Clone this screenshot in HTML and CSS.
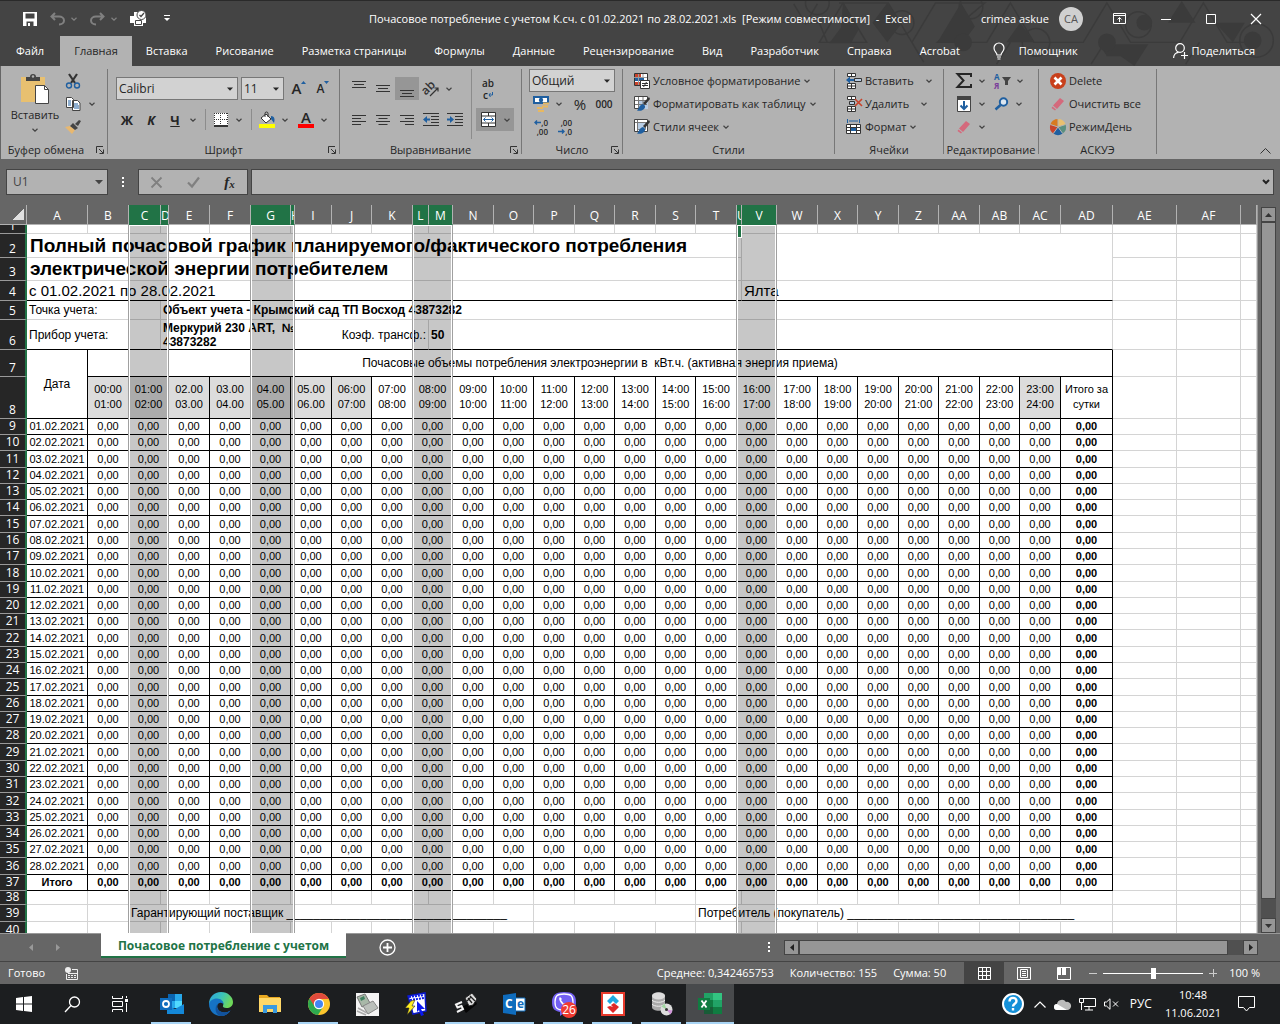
FILE: index.html
```html
<!DOCTYPE html>
<html lang="ru">
<head>
<meta charset="utf-8">
<meta name="viewport" content="width=device-width, initial-scale=1">
<title>Почасовое потребление с учетом К.сч. - Excel</title>
<link rel="stylesheet" href="styles.css">
</head>
<body>
<svg class="defs" aria-hidden="true">
  <symbol id="caret" viewBox="0 0 6 4"><path d="M.5.8 3 3.2 5.500.8" fill="none" stroke="currentColor" stroke-width="1.200"/></symbol>
  <symbol id="tri" viewBox="0 0 6 4"><path d="M0 .5h6L3 3.700z" fill="currentColor"/></symbol>
  <symbol id="launch" viewBox="0 0 8 8"><path d="M.5 7V.5H7M3 3l4 4M7.500 3.500v4h-4" fill="none" stroke="#333"/></symbol>
  <symbol id="eraser" viewBox="0 0 16 16"><path d="M10 2l4 3-7 8-4-3.500z" fill="#d4697c"/><path d="M2.500 10.500l3.500 3-1 1L1.500 12z" fill="#d4697c"/></symbol>
  <symbol id="brush" viewBox="0 0 16 16"><path d="M15 1l1 2-5 6-2-2z" fill="#333"/><path d="M9 8c2 1 3 3 1 5s-5 2-7 1.500C5 13 5 9 9 8z" fill="#1f5fa0"/></symbol>
  <symbol id="cellrows" viewBox="0 0 16 16"><path d="M1.500.5h8v3h-8zM5.500.5v3M1.500 10.500h8v5h-8zM5.500 10.500v5M1.500 13h8" fill="#fff" stroke="#333"/></symbol>
</svg>

<header class="title-bar">
  <svg class="pattern" viewBox="0 0 490 66" aria-hidden="true">
    <g fill="none" stroke="#3b3b3b" stroke-width="1.500"><path d="M0 3l12 20 12-20M26 42l24-40 24 40zM46 2h50l24 40 24-40h50l-48 40h50l24-40 24 40h50l24-40 24 40h50l24-40 24 40h30M12 22h14l8 20M120 42l12 20M220 42l-14 22M316 42l-14 22M412 42l-14 22"/><circle cx="24" cy="2" r="12"/><circle cx="110" cy="22" r="12"/><circle cx="180" cy="6" r="12"/><circle cx="246" cy="42" r="14"/><circle cx="350" cy="24" r="13"/><circle cx="470" cy="40" r="17"/></g>
    <g fill="#3b3b3b"><path d="M50 2l16 27-8 14H36l12-16z"/><path d="M80 22l15-20 15 20-15 20zM146 42l24-40 14 24-12 16zM230 22l14 20h-28zM310 44h50l-14 22-14-10-14 0zM428 22h30l-12 20zM380 22l14-22 14 22z"/><circle cx="172" cy="42" r="9"/><circle cx="318" cy="42" r="9"/><circle cx="356" cy="22" r="8"/><circle cx="466" cy="40" r="9"/></g>
  </svg>
  <div class="quick">
    <button aria-label="Сохранить"><svg width="14" height="14" viewBox="0 0 14 14"><path d="M0 0h14v14H0z" fill="#fff"/><path d="M2.500 1.500h9v5h-9zM3.500 9.500h7V14h-7z" fill="#444"/><path d="M5 11h2v3H5z" fill="#fff"/></svg></button>
    <button class="dim" aria-label="Отменить"><svg width="15" height="14" viewBox="0 0 15 14"><path d="M5 1L1.500 4.500 5 8M2 4.500h7c3 0 5 2 5 4s-2 4-5 4" fill="none" stroke="currentColor" stroke-width="2"/></svg><svg class="caret"><use href="#caret"/></svg></button>
    <button class="dim" aria-label="Вернуть"><svg width="15" height="14" viewBox="0 0 15 14"><path d="M10 1l3.500 3.500L10 8M13 4.500H6c-3 0-5 2-5 4s2 4 5 4" fill="none" stroke="currentColor" stroke-width="2"/></svg><svg class="caret"><use href="#caret"/></svg></button>
    <button aria-label="Печать"><svg width="17" height="17" viewBox="0 0 17 17"><path d="M0 6h4V2h4v4h8v7h-3v3H4v-3H0z" fill="#fff"/><path d="M5.500 10.500h6v4h-6z" fill="#fff" stroke="#444"/><circle cx="11.500" cy="5" r="4.500" fill="#fff" stroke="#444"/><path d="M9.500 5l1.500 1.500L14 3" fill="none" stroke="#444" stroke-width="1.300"/></svg></button>
    <button class="more" aria-label="Настройка панели"><svg width="6" height="7" viewBox="0 0 6 7"><path d="M0 .5h6" stroke="#fff"/><path d="M0 3h6L3 6z" fill="#fff"/></svg></button>
  </div>
  <h1 class="doc-title">Почасовое потребление с учетом К.сч. с 01.02.2021 по 28.02.2021.xls&nbsp; [Режим совместимости]&nbsp; -&nbsp; Excel</h1>
  <div class="account">
    <span>crimea askue</span><span class="avatar">CA</span>
    <button aria-label="Параметры ленты"><svg width="13" height="11" viewBox="0 0 13 11"><path d="M.5.5h12v10H.5zM.5 2.500h12M6.500 9V4.500M4.500 6.500l2-2 2 2" fill="none" stroke="#fff"/></svg></button>
    <button aria-label="Свернуть"><svg width="10" height="10" viewBox="0 0 10 10"><path d="M0 5.500h10" stroke="#fff"/></svg></button>
    <button aria-label="Развернуть"><svg width="10" height="10" viewBox="0 0 10 10"><path d="M.5.5h9v9h-9z" fill="none" stroke="#fff"/></svg></button>
    <button aria-label="Закрыть"><svg width="10" height="10" viewBox="0 0 10 10"><path d="M0 0l10 10M10 0L0 10" stroke="#fff" stroke-width="1.200"/></svg></button>
  </div>
</header>

<nav class="tabs">
  <a href="#" class="file">Файл</a><a href="#" class="current">Главная</a><a href="#">Вставка</a><a href="#">Рисование</a><a href="#">Разметка страницы</a><a href="#">Формулы</a><a href="#">Данные</a><a href="#">Рецензирование</a><a href="#">Вид</a><a href="#">Разработчик</a><a href="#">Справка</a><a href="#">Acrobat</a>
  <a href="#" class="helper"><svg width="12" height="17" viewBox="0 0 12 17"><path d="M4 12c0-3-3-3-3-7a5 5 0 0 1 10 0c0 4-3 4-3 7zM4 14h4M4.500 16h3" fill="none" stroke="#fff" stroke-width="1.200"/></svg>Помощник</a>
  <a href="#" class="share"><svg width="15" height="16" viewBox="0 0 15 16"><circle cx="7" cy="5" r="4.300" fill="none" stroke="#fff" stroke-width="1.200"/><path d="M.6 15c0-3 2-5.500 5-5.700M8 12.500h7M11.500 9v7" fill="none" stroke="#fff" stroke-width="1.200"/></svg>Поделиться</a>
</nav>

<section class="ribbon">
  <div class="group g-clip">
    <div class="tools">
      <button class="paste"><svg width="28" height="30" viewBox="0 0 28 30"><path d="M0 3h24v25H0z" fill="#e8c070"/><path d="M5 7V3h4a3 3 0 0 1 6 0h4v4z" fill="#444"/><circle cx="12" cy="2.500" r="1.200" fill="#b2b2b2"/><path d="M14.500 11.500h9l4 4v14h-13z" fill="#fff" stroke="#444"/><path d="M23.500 11.500v4h4" fill="none" stroke="#444"/></svg><span>Вставить</span><svg class="caret"><use href="#caret"/></svg></button>
      <div class="stack">
        <button aria-label="Вырезать"><svg width="16" height="16" viewBox="0 0 16 16"><path d="M4 1l6 9M12 1L6 10" stroke="#333" stroke-width="2.200"/><circle cx="4" cy="12.500" r="2.500" fill="none" stroke="#1f5fa0" stroke-width="1.400"/><circle cx="12" cy="12.500" r="2.500" fill="none" stroke="#1f5fa0" stroke-width="1.400"/></svg></button>
        <button aria-label="Копировать"><svg width="16" height="16" viewBox="0 0 16 16"><path d="M1.500 1.500h5l2 2v8h-7zM7.500 4.500h5l2.500 2.500v7.500H7.500z" fill="#fff" stroke="#444"/><path d="M3 5h3M3 7h3M3 9h3M9 8h4M9 10h5M9 12h5" stroke="#1f5fa0"/></svg><svg class="caret"><use href="#caret"/></svg></button>
        <button aria-label="Формат по образцу"><svg width="16" height="16" viewBox="0 0 16 16"><path d="M0 8l5-1 5 4-3 4z" fill="#e8b870"/><path d="M5 7l3-3 5 5-3 2zM10 5l4-4 2 1-3 5z" fill="#444"/></svg></button>
      </div>
    </div>
    <div class="label">Буфер обмена<button class="launch" aria-label="Параметры буфера"><svg width="8" height="8"><use href="#launch"/></svg></button></div>
  </div>

  <div class="group g-font">
    <div class="tools two-rows">
      <div class="line">
        <span class="pick pick-font"><select aria-label="Шрифт"><option>Calibri</option></select><svg class="tri"><use href="#tri"/></svg></span>
        <span class="pick pick-size"><select aria-label="Размер шрифта"><option>11</option></select><svg class="tri"><use href="#tri"/></svg></span>
        <button class="w24 glyph" aria-label="Увеличить шрифт"><b>A</b><svg width="5" height="3" viewBox="0 0 5 3"><path d="M0 3h5L2.500 0z" fill="#1f5fa0"/></svg></button>
        <button class="w24 glyph glyph-small" aria-label="Уменьшить шрифт"><b>A</b><svg width="5" height="3" viewBox="0 0 5 3"><path d="M0 0h5L2.500 3z" fill="#1f5fa0"/></svg></button>
      </div>
      <div class="line">
        <button class="w24 strong">Ж</button><button class="w24 strong slant">К</button><button class="w24 strong under">Ч</button><button class="w12" aria-label="Вид подчеркивания"><svg class="caret"><use href="#caret"/></svg></button>
        <i class="rule"></i>
        <button class="w24" aria-label="Границы"><svg width="14" height="14" viewBox="0 0 14 14"><path d="M0 0h14v12H0z" fill="#fff"/><path d="M0 .5h14M0 6.500h14M.5 0v12M6.500 0v12M13.500 0v12" stroke="#333" stroke-dasharray="1 1"/><path d="M0 13h14" stroke="#333" stroke-width="2"/></svg></button><button class="w12" aria-label="Выбор границ"><svg class="caret"><use href="#caret"/></svg></button>
        <i class="rule"></i>
        <button class="w24" aria-label="Цвет заливки"><svg width="16" height="16" viewBox="0 0 16 16"><path d="M2 6l5-4 5 5-5 4z" fill="#fff" stroke="#333"/><path d="M6 5V1.500a1.500 1.500 0 0 1 3 0V5" fill="none" stroke="#333"/><path d="M12 4c4 0 4 4 3 7-1-1-2-3-3-4z" fill="#1f5fa0"/><path d="M0 12h16v4H0z" fill="#ff0"/></svg></button><button class="w12" aria-label="Выбор заливки"><svg class="caret"><use href="#caret"/></svg></button>
        <button class="w24 ink" aria-label="Цвет текста"><b>A</b><i></i></button><button class="w12" aria-label="Выбор цвета"><svg class="caret"><use href="#caret"/></svg></button>
      </div>
    </div>
    <div class="label">Шрифт<button class="launch" aria-label="Параметры шрифта"><svg width="8" height="8"><use href="#launch"/></svg></button></div>
  </div>

  <div class="group g-align">
    <div class="tools">
      <div class="two-rows align-main">
        <div class="line">
          <button class="w24" aria-label="По верхнему краю"><svg width="14" height="16" viewBox="0 0 14 16"><path d="M0 .5h14M2 3.500h10M0 6.500h14" stroke="#333"/></svg></button><button class="w24" aria-label="По середине"><svg width="14" height="16" viewBox="0 0 14 16"><path d="M0 4.500h14M2 7.500h10M0 10.500h14" stroke="#333"/></svg></button><button class="w24 on" aria-label="По нижнему краю"><svg width="14" height="16" viewBox="0 0 14 16"><path d="M0 9.500h14M2 12.500h10M0 15.500h14" stroke="#333"/></svg></button><button class="w24" aria-label="Ориентация"><svg width="17" height="16" viewBox="0 0 17 16"><text x="0" y="10" font-size="12" font-weight="600" transform="rotate(-45 7 9)" fill="#333">ab</text><path d="M7 15l8-8M11.500 7H15v3.500" fill="none" stroke="#333" stroke-width="1.200"/></svg></button><button class="w12" aria-label="Выбор ориентации"><svg class="caret"><use href="#caret"/></svg></button>
        </div>
        <div class="line">
          <button class="w24" aria-label="По левому краю"><svg width="14" height="12" viewBox="0 0 14 12"><path d="M0 1.500h14M0 4.500h9M0 7.500h14M0 10.500h9" stroke="#333"/></svg></button><button class="w24" aria-label="По центру"><svg width="14" height="12" viewBox="0 0 14 12"><path d="M0 1.500h14M2.500 4.500h9M0 7.500h14M2.500 10.500h9" stroke="#333"/></svg></button><button class="w24" aria-label="По правому краю"><svg width="14" height="12" viewBox="0 0 14 12"><path d="M0 1.500h14M5 4.500h9M0 7.500h14M5 10.500h9" stroke="#333"/></svg></button><button class="w24" aria-label="Уменьшить отступ"><svg width="16" height="14" viewBox="0 0 16 14"><path d="M0 .5h16M8 3.500h8M8 6.500h8M8 9.500h8M0 12.500h16" stroke="#333"/><path d="M0 6.500l4-3.500v2.500h3v2H4V10z" fill="#1f5fa0"/></svg></button><button class="w24" aria-label="Увеличить отступ"><svg width="16" height="14" viewBox="0 0 16 14"><path d="M0 .5h16M8 3.500h8M8 6.500h8M8 9.500h8M0 12.500h16" stroke="#333"/><path d="M7 6.500L3 3v2.500H0v2h3V10z" fill="#1f5fa0"/></svg></button>
        </div>
      </div>
      <div class="two-rows align-side">
        <button class="w24 wrap" aria-label="Перенести текст"><b>ab</b><b>c<svg width="5" height="5" viewBox="0 0 5 5"><path d="M4.500 0v3H1M2.500 1L1 3l1.500 2" fill="none" stroke="#1f5fa0"/></svg></b></button>
        <button class="merge on" aria-label="Объединить ячейки"><svg width="15" height="15" viewBox="0 0 15 15"><path d="M.5.5h14v14H.5z" fill="#fff" stroke="#333"/><path d="M.5 4h14M.5 11h14M7.500 0v4M7.500 11v4" stroke="#333"/><path d="M2.500 7.500h10M4.500 5.500l-2 2 2 2M10.500 5.500l2 2-2 2" fill="none" stroke="#1f5fa0"/></svg><svg class="caret"><use href="#caret"/></svg></button>
      </div>
    </div>
    <div class="label">Выравнивание<button class="launch" aria-label="Параметры выравнивания"><svg width="8" height="8"><use href="#launch"/></svg></button></div>
  </div>

  <div class="group g-num">
    <div class="tools three-rows">
      <span class="pick pick-num"><select aria-label="Числовой формат"><option>Общий</option></select><svg class="tri"><use href="#tri"/></svg></span>
      <div class="line">
        <button class="w24" aria-label="Денежный формат"><svg width="16" height="16" viewBox="0 0 16 16"><path d="M0 0h16v8H0z" fill="#1f5fa0"/><path d="M2 2h12v4H2z" fill="#fff"/><circle cx="8" cy="4" r="2.200" fill="#1f5fa0"/><path d="M10 6.500h6v2h-6zM9 9.500h6v2H9zM4 11h6v2H4zM5 14h6v2H5z" fill="#e8b860"/></svg></button><button class="w12" aria-label="Выбор валюты"><svg class="caret"><use href="#caret"/></svg></button><button class="w24 percent">%</button><button class="w24 thousands">000</button>
      </div>
      <div class="line">
        <button class="w24 digits" aria-label="Увеличить разрядность"><span><svg width="7" height="5" viewBox="0 0 7 5"><path d="M7 2.500H1M3 .5l-2 2 2 2" fill="none" stroke="#1f5fa0" stroke-width="1.400"/></svg>,0</span><span>,00</span></button><button class="w24 digits" aria-label="Уменьшить разрядность"><span>,00</span><span><svg width="7" height="5" viewBox="0 0 7 5"><path d="M0 2.500h6M4 .5l2 2-2 2" fill="none" stroke="#1f5fa0" stroke-width="1.400"/></svg>,0</span></button>
      </div>
    </div>
    <div class="label">Число<button class="launch" aria-label="Параметры числа"><svg width="8" height="8"><use href="#launch"/></svg></button></div>
  </div>

  <div class="group g-style">
    <div class="tools three-rows">
      <button class="cmd"><svg width="16" height="16" viewBox="0 0 16 16"><path d="M.5.5h13v12H.5z" fill="#fff" stroke="#333"/><path d="M1 1h6v3H1zM1 9h5v3H1z" fill="#c8432b"/><path d="M1 5h9v3H1z" fill="#1f5fa0"/><path d="M4.500 1v11M9 1v4M0 4.500h13" stroke="#999"/><path d="M6.500 7.500h9v8h-9z" fill="#fff" stroke="#333"/><path d="M8 10.500h6M8 12.500h6M12.500 9l-3 5" stroke="#333"/></svg>Условное форматирование<svg class="caret"><use href="#caret"/></svg></button>
      <button class="cmd"><svg width="16" height="16" viewBox="0 0 16 16"><path d="M.5.5h13v12H.5z" fill="#fff" stroke="#444"/><path d="M5 5h9v8H5z" fill="#b8cde4"/><path d="M1 4.500h12M1 8.500h12M4.500 1v11M9 1v11" stroke="#777"/><use href="#brush"/></svg>Форматировать как таблицу<svg class="caret"><use href="#caret"/></svg></button>
      <button class="cmd"><svg width="16" height="16" viewBox="0 0 16 16"><path d="M.5.5h13v12H.5z" fill="#fff" stroke="#444"/><path d="M3.500 3.500h8v7h-8z" fill="#b8cde4" stroke="#888"/><path d="M1 3.500h12M3.500 1v11" stroke="#777"/><use href="#brush"/></svg>Стили ячеек<svg class="caret"><use href="#caret"/></svg></button>
    </div>
    <div class="label">Стили</div>
  </div>

  <div class="group g-cells">
    <div class="tools three-rows">
      <button class="cmd wide"><svg width="16" height="16" viewBox="0 0 16 16"><use href="#cellrows"/><path d="M8.500 5.500h7v3h-7z" fill="#b8cde4" stroke="#333"/><path d="M0 7l4-3.500V6h4v2H4v2.500z" fill="#1f5fa0"/></svg>Вставить<svg class="caret"><use href="#caret"/></svg></button>
      <button class="cmd wide"><svg width="16" height="16" viewBox="0 0 16 16"><use href="#cellrows"/><path d="M3.500 5.500h5v3h-5z" fill="#b8cde4" stroke="#333"/><path d="M9 3l7 7M16 3l-7 7" stroke="#c8432b" stroke-width="1.600"/></svg>Удалить<svg class="caret"><use href="#caret"/></svg></button>
      <button class="cmd"><svg width="16" height="16" viewBox="0 0 16 16"><path d="M1.500 0v4M13.500 0v4M3 2h9" stroke="#1f5fa0"/><path d="M.5 5.500h14v9H.5z" fill="#fff" stroke="#333"/><path d="M0 8.500h15M0 11.500h15M4.500 5v10M10.500 5v10" stroke="#333"/><path d="M5 9h5v3H5z" fill="#1f5fa0"/></svg>Формат<svg class="caret"><use href="#caret"/></svg></button>
    </div>
    <div class="label">Ячейки</div>
  </div>

  <div class="group g-edit">
    <div class="tools three-rows">
      <div class="line"><button class="edit-a" aria-label="Автосумма"><svg width="16" height="16" viewBox="0 0 16 16"><path d="M15 4V1H1.500l6 6.500L1.500 14H15v-3" fill="none" stroke="#262626" stroke-width="2"/></svg><svg class="caret"><use href="#caret"/></svg></button><button class="edit-b" aria-label="Сортировка и фильтр"><span class="az"><b>А</b><b>Я</b></span><svg width="9" height="8" viewBox="0 0 9 8"><path d="M0 0h9L6 4v4H3V4z" fill="#444"/></svg><svg class="caret"><use href="#caret"/></svg></button></div>
      <div class="line"><button class="edit-a" aria-label="Заполнить"><svg width="16" height="16" viewBox="0 0 16 16"><path d="M1.500.5h13v15h-13z" fill="#fff" stroke="#444"/><path d="M1 0h14v4H1z" fill="#444"/><path d="M8 5v8M4.500 9.500L8 13l3.500-3.500" fill="none" stroke="#1f5fa0" stroke-width="2"/></svg><svg class="caret"><use href="#caret"/></svg></button><button class="edit-b" aria-label="Найти"><svg width="16" height="16" viewBox="0 0 16 16"><circle cx="9.500" cy="6" r="3.700" fill="#dce6f0" stroke="#1f5fa0" stroke-width="2"/><path d="M6.500 9L1.500 13.500" stroke="#1f5fa0" stroke-width="2.500"/></svg><svg class="caret"><use href="#caret"/></svg></button></div>
      <div class="line"><button class="edit-a" aria-label="Очистить"><svg width="16" height="16"><use href="#eraser"/></svg><svg class="caret"><use href="#caret"/></svg></button></div>
    </div>
    <div class="label">Редактирование</div>
  </div>

  <div class="group g-askue">
    <div class="tools three-rows">
      <button class="cmd"><svg width="16" height="16" viewBox="0 0 16 16"><circle cx="8" cy="8" r="8" fill="#c8401c"/><path d="M4.500 4.500l7 7M11.500 4.500l-7 7" stroke="#fff" stroke-width="2.600"/></svg>Delete</button>
      <button class="cmd"><svg width="16" height="16"><use href="#eraser"/></svg>Очистить все</button>
      <button class="cmd"><svg width="16" height="16" viewBox="0 0 16 16"><path d="M8 8V0a8 8 0 0 1 7.600 5.500z" fill="#e8c070"/><path d="M8 8l7.600-2.500a8 8 0 0 1-2.900 9z" fill="#5a9080"/><path d="M8 8l4.700 6.500a8 8 0 0 1-9.400 0z" fill="#1f5fa0"/><path d="M8 8l-4.700 6.500a8 8 0 0 1-2.900-9z" fill="#c8432b"/><path d="M8 8L.4 5.500A8 8 0 0 1 8 0z" fill="#d87a20"/><path d="M8 8V0M8 8l7.600-2.500M8 8l4.700 6.500M8 8l-4.700 6.500M8 8L.4 5.500" stroke="#b2b2b2"/></svg>РежимДень</button>
    </div>
    <div class="label">АСКУЭ</div>
  </div>
  <button class="collapse" aria-label="Свернуть ленту"><svg width="11" height="6" viewBox="0 0 11 6"><path d="M.5 5.500l5-5 5 5" fill="none" stroke="#333"/></svg></button>
</section>

<section class="formula-row">
  <span class="pick name-box"><input aria-label="Имя ячейки" value="U1"><svg class="tri big"><use href="#tri"/></svg></span>
  <svg class="dots" width="2" height="11" viewBox="0 0 2 11"><path d="M0 0h2v2H0zM0 4h2v2H0zM0 8h2v2H0z" fill="#fff"/></svg>
  <div class="fx">
    <button aria-label="Отмена"><svg width="11" height="11" viewBox="0 0 11 11"><path d="M.5.5l10 10M10.500.5l-10 10" stroke="#808080" stroke-width="1.800"/></svg></button>
    <button aria-label="Ввод"><svg width="13" height="11" viewBox="0 0 13 11"><path d="M1 5.500l4 4 7-9" fill="none" stroke="#808080" stroke-width="2.200"/></svg></button>
    <button class="fn" aria-label="Вставить функцию">f<small>x</small></button>
  </div>
  <div class="formula"><input aria-label="Строка формул"><svg width="8" height="6" viewBox="0 0 8 6"><path d="M1 1l3 3 3-3" fill="none" stroke="#222" stroke-width="2"/></svg></div>
</section>

<main class="work">
  <div class="sheet">
    <table class="grid">
      <colgroup id="cols"></colgroup>
      <thead><tr id="letters"></tr></thead>
      <tbody id="top">
        <tr class="h9" data-blank><th><div class="cut">1</div></th></tr>
        <tr class="h24"><th>2</th><td colspan="21" class="headline">Полный почасовой график планируемого/фактического потребления</td><td colspan="9" rowspan="2"></td><td></td><td></td><td></td></tr>
        <tr class="h23"><th>3</th><td colspan="21" class="headline">электрической энергии потребителем</td><td></td><td></td><td></td></tr>
        <tr class="h20"><th>4</th><td colspan="21" class="period dark-b">с 01.02.2021 по 28.02.2021</td><td colspan="9" class="period dark-b">Ялта</td><td></td><td></td><td></td></tr>
        <tr class="h19"><th>5</th><td colspan="3" class="note">Точка учета:</td><td colspan="27" class="note strong-text">Объект учета - Крымский сад ТП Восход 43873282</td><td></td><td></td><td></td></tr>
        <tr class="h30"><th>6</th><td colspan="3" class="note dark-b">Прибор учета:</td><td colspan="5" class="note strong-text dark-b meter">Меркурий 230 ART,&nbsp; №<br>43873282</td><td colspan="4" class="note right dark-b">Коэф. трансф.:</td><td colspan="18" class="note strong-text dark-b">50</td><td></td><td></td><td></td></tr>
        <tr class="h27"><th>7</th><td rowspan="2" class="box caption">Дата</td><td colspan="29" class="box caption">Почасовые объемы потребления электроэнергии в&nbsp; кВт.ч. (активная энергия приема)</td><td></td><td></td><td></td></tr>
        <tr class="h42" id="hours"><th>8</th></tr>
      </tbody>
      <tbody id="days"></tbody>
      <tbody>
        <tr class="h14" data-blank><th>38</th></tr>
        <tr class="h17"><th>39</th><td></td><td></td><td colspan="13" class="sign">Гарантирующий поставщик _________________________________</td><td colspan="4"></td><td colspan="11" class="sign">Потребитель (покупатель) __________________________________</td><td></td><td></td><td></td></tr>
        <tr class="h17" data-blank><th>40</th></tr>
      </tbody>
    </table>
    <div class="band band-c"></div><div class="band band-g"></div><div class="band band-l"></div><div class="band band-u"></div>
    <div class="active-cell"></div>
  </div>
  <div class="vscroll">
    <button aria-label="Вверх"><svg width="7" height="4" viewBox="0 0 7 4"><path d="M0 4h7L3.500 0z" fill="#333"/></svg></button>
    <div class="vthumb"></div><div class="vgap"></div>
    <button aria-label="Вниз"><svg width="7" height="4" viewBox="0 0 7 4"><path d="M0 0h7L3.500 4z" fill="#333"/></svg></button>
  </div>
</main>

<section class="sheet-tabs">
  <div class="tab-nav"><button aria-label="Предыдущий лист"><svg width="4" height="7" viewBox="0 0 4 7"><path d="M4 0v7L0 3.500z" fill="#999"/></svg></button><button aria-label="Следующий лист"><svg width="4" height="7" viewBox="0 0 4 7"><path d="M0 0v7l4-3.500z" fill="#999"/></svg></button></div>
  <a href="#" class="sheet-tab">Почасовое потребление с учетом</a>
  <button class="add" aria-label="Новый лист"><svg width="17" height="17" viewBox="0 0 17 17"><circle cx="8.500" cy="8.500" r="7.500" fill="none" stroke="#fff" stroke-width="1.300"/><path d="M8.500 4v9M4 8.500h9" stroke="#fff" stroke-width="1.800"/></svg></button>
  <svg class="dots" width="2" height="11" viewBox="0 0 2 11"><path d="M0 0h2v2H0zM0 4h2v2H0zM0 8h2v2H0z" fill="#fff"/></svg>
  <div class="hscroll">
    <button aria-label="Влево"><svg width="4" height="7" viewBox="0 0 4 7"><path d="M4 0v7L0 3.500z" fill="#222"/></svg></button>
    <div class="hthumb"></div><div class="hgap"></div>
    <button aria-label="Вправо"><svg width="4" height="7" viewBox="0 0 4 7"><path d="M0 0v7l4-3.500z" fill="#222"/></svg></button>
  </div>
</section>

<footer class="status">
  <span>Готово</span>
  <svg class="macro" width="13" height="13" viewBox="0 0 13 13"><circle cx="3" cy="3" r="3" fill="#eee"/><path d="M7 2.500h5.500v10h-11V7M3 6.500h10M3 8.500h2M6 8.500h2M9 8.500h2M3 10.500h2M6 10.500h2M9 10.500h2" fill="none" stroke="#eee"/></svg>
  <div class="stats"><span>Среднее: 0,342465753</span><span>Количество: 155</span><span>Сумма: 50</span></div>
  <div class="views">
    <button class="on" aria-label="Обычный"><svg width="13" height="13" viewBox="0 0 13 13"><path d="M.5.5h12v12H.5zM.5 4.500h12M.5 8.500h12M4.500.5v12M8.500.5v12" fill="none" stroke="#fff"/></svg></button><button aria-label="Разметка страницы"><svg width="14" height="13" viewBox="0 0 14 13"><path d="M.5.5h13v12H.5zM3.500 2.500h7v8h-7zM5 4.500h4M5 6.500h4M5 8.500h4" fill="none" stroke="#fff"/></svg></button><button aria-label="Страничный"><svg width="14" height="13" viewBox="0 0 14 13"><path d="M.5.5h13v12H.5z" fill="none" stroke="#fff"/><path d="M1 1h3v7H1zM5 1h4v7H5z" fill="#fff"/></svg></button>
  </div>
  <div class="zoom"><button aria-label="Мельче"><svg width="8" height="8" viewBox="0 0 8 8"><path d="M0 4.500h8" stroke="#ccc"/></svg></button><input type="range" min="10" max="190" value="100" aria-label="Масштаб"><button aria-label="Крупнее"><svg width="8" height="8" viewBox="0 0 8 8"><path d="M0 4.500h8M4.500 0v8" stroke="#ccc"/></svg></button><span>100 %</span></div>
</footer>

<section class="taskbar">
  <button class="sys" aria-label="Пуск"><svg width="16" height="16" viewBox="0 0 16 16"><path d="M0 2l7-1v6.500H0zM8 1l8-1v7.500H8zM0 8.500h7V15l-7-1zM8 8.500h8V16l-8-1z" fill="#fff"/></svg></button>
  <button class="sys" aria-label="Поиск"><svg width="17" height="17" viewBox="0 0 17 17"><circle cx="10.500" cy="6" r="5" fill="none" stroke="#fff" stroke-width="1.300"/><path d="M7 9.500L1 16" stroke="#fff" stroke-width="1.300"/></svg></button>
  <button class="sys" aria-label="Представление задач"><svg width="17" height="16" viewBox="0 0 17 16"><path d="M.5 0v2.500h10V0M.5 5.500h10v5H.5zM.5 16v-2.500h10V16M14.500 0v2M14.500 7v9" fill="none" stroke="#fff"/><path d="M13 3h3v3h-3z" fill="#fff"/></svg></button>
  <div class="apps">
  <button class="open" aria-label="Outlook"><svg width="24" height="22" viewBox="0 0 24 22"><path d="M8 1h14v14H8z" fill="#28a8ea"/><path d="M8 1h7v7H8z" fill="#0a64b0"/><path d="M15 8h7v7h-7z" fill="#50d9ff"/><path d="M7 12l8 4 9-5v10H7z" fill="#1488d8"/><path d="M0 5h12v12H0z" fill="#0f6cbd"/><circle cx="6" cy="11" r="3" fill="none" stroke="#fff" stroke-width="1.800"/></svg></button>
  <button aria-label="Edge"><svg width="24" height="24" viewBox="0 0 24 24"><defs><linearGradient id="edge-top" x2="1" y2=".4"><stop offset="0" stop-color="#2a9fe0"/><stop offset=".55" stop-color="#3cc4b8"/><stop offset="1" stop-color="#6fd85a"/></linearGradient></defs><path d="M0 12C0 5 5 0 12 0s12 5 12 10c0 4-3 6-6.500 6-3 0-4-1.200-3.500-2.200 1.200-2.300-.8-5.300-4.500-5.300C5 8.500 1.500 10 0 13z" fill="url(#edge-top)"/><path d="M0 12c1-4 5-5.500 8-5.500 4 0 7 3 6.500 6-.8-1.500-3-2.500-5-1-2 2-1.500 6 2 8 3 1.700 7 1 10-1-2 3.500-5.500 5.500-9.500 5.500C5 24 0 18.500 0 12z" fill="#1673c4"/><path d="M9 11.800c-2 2.200-1.300 5.800 2.500 7.700 3 1.500 7 1 10-1-2 3.500-5.500 5.500-9.500 5.500-6 0-7-10-3-12.200z" fill="#12529c"/></svg></button>
  <button aria-label="Проводник"><svg width="22" height="20" viewBox="0 0 22 20"><path d="M0 1h8l2 2h11v5H0z" fill="#e8a820"/><path d="M0 4h22v14H0z" fill="#ffd868"/><path d="M4 11h14v8h-4v-4H8v4H4z" fill="#3a9ae0"/></svg></button>
  <button class="open" aria-label="Chrome"><svg width="22" height="22" viewBox="0 0 22 22"><circle cx="11" cy="11" r="11" fill="#fbc52d"/><path d="M1.500 5.500a11 11 0 0 1 19 0L21 6H11l-5 8z" fill="#e04a3c"/><path d="M1.500 5.500L7 14l8 0-5 8A11 11 0 0 1 1.500 5.500z" fill="#2da94f"/><circle cx="11" cy="11" r="5.200" fill="#fff"/><circle cx="11" cy="11" r="4" fill="#4285f4"/></svg></button>
  <button aria-label="Счетчики"><svg width="23" height="23" viewBox="0 0 23 23"><path d="M0 0h23v23H0z" fill="#f4f4f4"/><path d="M1 4l8-3 5 9-8 4z" fill="#a8b8a8" stroke="#777"/><path d="M4 5l4-2 1 3-4 2z" fill="#408060"/><path d="M7 13l10-5 5 7-10 6z" fill="#bbc0bb" stroke="#888"/><path d="M2 15l9 5M1 18l9 4" stroke="#aaa" stroke-width="1.500"/></svg></button>
  <button aria-label="Конфигуратор"><svg width="23" height="23" viewBox="0 0 23 23"><path d="M3 3l17-3 1 18-13 3z" fill="#fff" stroke="#0a18c8" stroke-width="1.500"/><path d="M4 4l15-2M5 7l14-2" stroke="#0a18e8" stroke-width="2" stroke-dasharray="2 1"/><path d="M12 8l8 8-4 0 3 6-3 1-2-6-2 2z" fill="#0a18f0"/><path d="M6 8l4-1-3 6h3l-8 9 2-7H0z" fill="#ffee20" stroke="#222" stroke-width=".6"/></svg></button>
  <button class="open" aria-label="Терминал"><svg width="24" height="24" viewBox="0 0 24 24"><path d="M8 15l4 6 11-9-2-4z" fill="#050505"/><path d="M8 10l-6 2.500 1.500 3 4-1.500 1.500 3-6 3" fill="none" stroke="#f4f4f4" stroke-width="2"/><path d="M11 6l7-5 5 6-4 6-4 1z" fill="#ddd" stroke="#222"/><path d="M14 6l4 5M16 4l5 5M13 9l4-4" stroke="#222" stroke-width="1.300"/></svg></button>
  <button class="open" aria-label="Энергосфера"><svg width="23" height="22" viewBox="0 0 23 22"><path d="M11 5h11v13H11z" fill="#fff" stroke="#0f6cbd"/><path d="M0 2l13-2v22L0 20z" fill="#0f6cbd"/><text x="2" y="15" font-size="12" font-weight="700" fill="#fff">C</text><text x="14" y="15" font-size="12" font-weight="700" fill="#0f6cbd">e</text></svg></button>
  <button class="open" aria-label="Viber"><svg width="24" height="24" viewBox="0 0 24 24"><path d="M12 0c9 0 12 3 12 10s-3 11-12 11l-4 3v-4C2 19 0 16 0 10S3 0 12 0z" fill="#7360f2"/><path d="M12 2c7 0 9 2 9 8s-2 8-9 8-9-2-9-8 2-8 9-8z" fill="none" stroke="#fff" stroke-width="1.300"/><path d="M8 5c-3 2 3 10 7 10l1-2-3-2-1 1-3-4 1-1z" fill="#fff"/></svg><span class="badge">26</span></button>
  <button class="open" aria-label="Метрика"><svg width="24" height="24" viewBox="0 0 24 24"><path d="M1 1h22v22H1z" fill="#fff" stroke="#e83a2c" stroke-width="2"/><path d="M12 3l6 6-3 3-3-3-3 3-3-3z" fill="#20a8e0"/><path d="M12 21l6-6-5-4-3 2 2 2-3-1-3 1z" fill="#e02828"/></svg></button>
  <button class="open" aria-label="База данных"><svg width="22" height="24" viewBox="0 0 22 24"><path d="M1 4c0-5 13-5 13 0v11c0 5-13 5-13 0z" fill="#aaa"/><ellipse cx="7.500" cy="4" rx="6.500" ry="3.500" fill="#ddd"/><path d="M1 8c2 3 11 3 13 0M1 12c2 3 11 3 13 0" fill="none" stroke="#eee"/><circle cx="15.500" cy="17.500" r="6" fill="#ddd"/><path d="M15.500 17.500l-5-3 3-3z" fill="#a0d8a0"/><path d="M15.500 17.500l6 1-2 4z" fill="#d090d8"/><circle cx="15.500" cy="17.500" r="1.500" fill="#333"/></svg></button>
  <button class="open lit" aria-label="Excel"><svg width="24" height="22" viewBox="0 0 24 22"><path d="M6 0h18v21H6z" fill="#21a366"/><path d="M15 0h9v7h-9z" fill="#33c481"/><path d="M6 7h9v7H6z" fill="#107c41"/><path d="M6 14h9v7H6z" fill="#185c37"/><path d="M15 14h9v7h-9z" fill="#107c41"/><path d="M0 5h12v12H0z" fill="#107c41"/><path d="M3.500 7.500l5 7M8.500 7.500l-5 7" stroke="#fff" stroke-width="1.800"/></svg></button>
  </div>
  <div class="tray">
    <svg class="help" width="22" height="22" viewBox="0 0 22 22"><circle cx="11" cy="11" r="10" fill="#1490d8" stroke="#fff" stroke-width="2"/><path d="M7.500 8.500c0-5 7-4.500 7-.5 0 3-3.500 2.500-3.500 5.500M11 15v2.500" fill="none" stroke="#fff" stroke-width="2.400"/></svg>
    <svg width="12" height="7" viewBox="0 0 12 7"><path d="M.5 6.500L6 1l5.500 5.500" fill="none" stroke="#fff" stroke-width="1.200"/></svg>
    <svg width="17" height="11" viewBox="0 0 17 11"><path d="M3 11a3 3 0 0 1 0-6 5 5 0 0 1 9-2 4 4 0 0 1 2 8z" fill="#bbb"/><path d="M3 5l10 6H3a3 3 0 0 1 0-6z" fill="#fff"/></svg>
    <svg width="17" height="14" viewBox="0 0 17 14"><path d="M4 1.500h12.500v8H5M10 10v3M6 13h8M.5 1.500h4v4h-4zM2.500 6v7" fill="none" stroke="#fff"/></svg>
    <svg width="15" height="12" viewBox="0 0 15 12"><path d="M.5 4h2L6 .8v10.500L2.500 8h-2zM9 3.500l5 5M14 3.500l-5 5" fill="none" stroke="#fff"/></svg>
    <span class="lang">РУС</span>
    <span class="clock"><time>10:48</time><time>11.06.2021</time></span>
    <svg class="bell" width="17" height="16" viewBox="0 0 17 16"><path d="M.5.5h16v11h-5L8.500 15l-3-3.500h-5z" fill="none" stroke="#fff"/></svg>
  </div>
</section>
<script src="sheet.js"></script>
</body>
</html>
```

FILE: sheet.js
```js
// Column letter, width in pixels, and 1 when the column is selected.
const columns = [
  ['A', 61], ['B', 41], ['C', 32, 1], ['D', 8, 1], ['E', 41], ['F', 41], ['G', 40, 1], ['H', 4, 1],
  ['I', 37], ['J', 40], ['K', 41], ['L', 16, 1], ['M', 24, 1], ['N', 41], ['O', 40], ['P', 41],
  ['Q', 40], ['R', 41], ['S', 40], ['T', 41], ['U', 5, 1], ['V', 35, 1], ['W', 41], ['X', 40],
  ['Y', 41], ['Z', 40], ['AA', 41], ['AB', 40], ['AC', 41], ['AD', 52], ['AE', 64], ['AF', 64], ['', 0]
];
// Hours whose cell is merged over two columns.
const merged = [1, 5, 8, 16];
const taller = [11, 15, 18, 22, 25, 29, 32, 36];

const two = n => String(n).padStart(2, '0');
const hourIndexes = Array.from({ length: 24 }, (_, i) => i);
const span = h => merged.includes(h) ? ' colspan="2"' : '';
const rest = '<td></td>'.repeat(3);

document.getElementById('cols').innerHTML =
  '<col style="width:27px">' + columns.map(c => c[1] ? `<col style="width:${c[1]}px">` : '<col>').join('');
document.getElementById('letters').innerHTML =
  '<th class="corner"></th>' + columns.map(c => `<th class="${c[2] ? 'sel' : ''}">${c[0]}</th>`).join('');

document.querySelectorAll('tr[data-blank]').forEach(row => {
  row.insertAdjacentHTML('beforeend', '<td></td>'.repeat(columns.length));
});

document.getElementById('hours').insertAdjacentHTML('beforeend',
  hourIndexes.map(h => {
    const mark = h >= 2 && h <= 5 ? '.' : ':';
    const shade = h < 7 || h === 23 ? ' shade' : '';
    return `<td class="box hour${shade}"${span(h)}>${two(h)}${mark}00<br>${two(h + 1)}${mark}00</td>`;
  }).join('') + '<td class="box hour">Итого за сутки</td>' + rest);

let days = '';
for (let row = 9; row <= 37; row++) {
  const total = row === 37;
  days += `<tr class="${taller.includes(row) ? 'h17' : 'h16'}${total ? ' total' : ''}"><th>${row}</th>` +
    `<td class="box">${total ? 'Итого' : two(row - 8) + '.02.2021'}</td>` +
    hourIndexes.map(h => `<td class="box"${span(h)}>0,00</td>`).join('') +
    `<td class="box strong-text">0,00</td>${rest}</tr>`;
}
document.getElementById('days').innerHTML = days;
```

FILE: styles.css
```css
* { box-sizing: border-box; }
body {
  margin: 0;
  height: 100vh;
  display: flex;
  flex-direction: column;
  overflow: hidden;
  background: #666;
  color: #262626;
  font: 11px/16px "Open Sans", "Noto Sans", sans-serif;
}
button, input, select { font: inherit; color: inherit; border: 0; background: none; padding: 0; margin: 0; }
button { display: flex; align-items: center; justify-content: center; white-space: nowrap; }
a { color: inherit; text-decoration: none; }
svg { flex: none; display: block; overflow: visible; }
.defs { position: absolute; width: 0; height: 0; }
.caret { width: 6px; height: 4px; color: #444; }
.tri { width: 6px; height: 4px; }
.tri.big { width: 8px; height: 6px; }

.title-bar {
  position: relative;
  display: flex;
  align-items: center;
  height: 36px;
  flex: none;
  background: #444;
  border-top: 1px solid #2a2a2a;
  box-shadow: 0 30px 0 #444;
  color: #fff;
}
.title-bar .caret { color: inherit; }
.pattern { position: absolute; right: 0; top: 0; width: 490px; height: 65px; overflow: hidden; }
.quick { display: flex; align-items: center; width: 300px; padding-left: 23px; gap: 13px; }
.quick .dim { color: #808080; gap: 6px; }
.quick .more { margin-left: 4px; }
.doc-title { flex: 1; margin: 0; text-align: center; font-size: 11px; font-weight: 400; white-space: nowrap; position: relative; }
.account { position: relative; display: flex; align-items: center; width: 300px; padding-right: 19px; justify-content: flex-end; white-space: nowrap; }
.avatar { width: 24px; height: 24px; border-radius: 50%; background: #d0d0d0; color: #555; text-align: center; line-height: 24px; margin: 0 30px 0 10px; }
.account button + button { margin-left: 35px; }

.tabs { position: relative; display: flex; height: 30px; flex: none; color: #fff; }
.tabs a { display: flex; align-items: center; padding: 0 14px; white-space: nowrap; }
.tabs .file { padding: 0 16px; }
.tabs .current { background: #b2b2b2; color: #262626; }
.tabs .helper { gap: 14px; margin-left: 5px; }
.tabs .share { margin-left: auto; gap: 4px; padding-right: 25px; }

.ribbon { display: flex; height: 93px; flex: none; background: #b2b2b2; margin-left: 1px; position: relative; }
.group { display: flex; flex-direction: column; flex: none; border-right: 1px solid #777; margin: 3px 0 5px; }
.tools { display: flex; height: 70px; flex: none; }
.two-rows { flex-direction: column; display: flex; padding-top: 8px; gap: 8px; }
.three-rows { flex-direction: column; align-items: flex-start; }
.three-rows > * { height: 23px; flex: none; }
.line { display: flex; align-items: center; height: 23px; }
.line button { height: 23px; }
.label { position: relative; text-align: center; line-height: 14px; padding-top: 4px; white-space: nowrap; }
.launch { position: absolute; right: 3px; top: 7px; }
.w24 { width: 24px; }
.w12 { width: 12px; }
.on { background: #969696; }
.rule { width: 1px; height: 21px; background: #8c8c8c; margin: 0 3px 0 6px; }
.pick { display: flex; align-items: center; border: 1px solid #777; background: #d2d2d2; height: 23px; padding-right: 4px; font-size: 12px; }
.pick select, .pick input { appearance: none; flex: 1; min-width: 0; padding-left: 2px; outline: none; }
.g-clip { width: 107px; }
.g-clip .label { padding-right: 16px; }
.g-font { width: 232px; }
.g-align { width: 182px; }
.g-num { width: 101px; }
.g-style { width: 212px; }
.g-cells { width: 109px; }
.g-edit { width: 95px; }
.g-askue { width: 118px; }
.paste { flex-direction: column; margin-left: 6px; width: 56px; gap: 3px; justify-content: flex-start; padding-top: 5px; }
.paste .caret { margin-top: 2px; }
.stack { display: flex; flex-direction: column; }
.stack button { height: 23px; gap: 8px; margin-left: 2px; justify-content: flex-start; }
.g-font .tools { padding-left: 7px; }
.g-font .line:first-child { padding-left: 1px; }
.pick-font { width: 122px; margin-right: 3px; }
.pick-size { width: 43px; margin-right: 3px; }
.glyph { align-items: flex-start; font-size: 15px; }
.glyph b { line-height: 23px; font-weight: 600; }
.glyph svg { margin-top: 4px; }
.glyph-small { font-size: 12px; }
.strong { font-weight: 700; font-size: 13px; }
.slant { font-style: italic; }
.under { text-decoration: underline; }
.ink { flex-direction: column; margin-left: 3px; }
.ink b { font-size: 15px; line-height: 13px; font-weight: 600; }
.ink i { width: 16px; height: 4px; background: #f00; }
.align-main { padding-left: 7px; width: 131px; }
.align-side { border-left: 1px solid #8c8c8c; padding-left: 4px; }
.wrap { flex-direction: column; height: 23px; font-size: 10px; }
.wrap b { display: flex; align-items: center; font-weight: 600; line-height: 12px; }
.merge { width: 38px; height: 23px; gap: 8px; }
.g-num .tools { padding-left: 7px; }
.pick-num { width: 86px; }
.percent { font-size: 15px; margin-left: 3px; }
.thousands { font-size: 10px; font-weight: 600; }
.digits { flex-direction: column; line-height: 9px; font-size: 8px; font-weight: 600; align-items: flex-end; padding-right: 5px; }
.digits span { display: flex; align-items: center; height: 9px; }
.cmd { gap: 3px; }
.g-style .tools, .g-cells .tools, .g-askue .tools { padding-left: 11px; }
.cmd .caret { margin-left: 1px; }
.cmd.wide .caret { margin-left: 9px; }
.g-edit .tools { padding-left: 12px; }
.edit-a { gap: 7px; width: 38px; justify-content: flex-start; }
.edit-b { gap: 6px; }
.az { display: flex; flex-direction: column; font-size: 8px; line-height: 9px; color: #1f5fa0; margin-right: -4px; }
.az b + b { color: #7a3d9a; }
.collapse { margin: auto 9px 5px auto; }

.formula-row { display: flex; align-items: center; height: 46px; flex: none; padding: 0 6px; }
.formula-row .pick, .fx, .formula { height: 26px; background: #b2b2b2; border: 1px solid #444; }
.name-box { width: 102px; color: #444; }
.name-box input { padding-left: 6px; }
.dots { margin: 0 14px; }
.fx { display: flex; align-items: center; width: 110px; justify-content: space-around; margin-right: 3px; }
.fn { font: italic 700 15px "Liberation Serif", serif; }
.fn small { font-size: 11px; padding-top: 4px; }
.formula { flex: 1; display: flex; align-items: center; padding-right: 3px; }
.formula input { flex: 1; outline: none; }

.work { display: flex; flex: 1; min-height: 0; }
.sheet { position: relative; flex: 1; min-width: 0; overflow: hidden; background: #fff; border-right: 1px solid #999; }
.grid { table-layout: fixed; width: 100%; border-spacing: 0; font: 11px/14px "Liberation Sans", Arial, sans-serif; color: #000; }
.grid th, .grid td { padding: 0; border: solid #d4d4d4; border-width: 0 1px 1px 0; overflow: hidden; }
.grid thead th {
  height: 20px;
  padding-top: 2px;
  background: #666;
  color: #fff;
  font: 12px/17px "Open Sans", "Noto Sans", sans-serif;
  border-color: #b2b2b2;
}
.grid thead th.sel { background: #217346; border-bottom-color: #217346; }
.grid thead .corner { background: linear-gradient(135deg, #666 50%, #e0e0e0 50%) 12px 3px / 12px 12px no-repeat #666; }
.grid tbody th {
  padding-bottom: 1px;
  background: #262626;
  color: #fff;
  font: 12px/14px "Open Sans", "Noto Sans", sans-serif;
  vertical-align: bottom;
  border-right: 2px solid #217346;
  border-bottom-color: #999;
}
.grid tbody .h9 th { padding: 0; }
.cut { height: 8px; display: flex; align-items: flex-end; justify-content: center; overflow: hidden; }
.h9 { height: 9px; } .h14 { height: 14px; } .h16 { height: 16px; } .h17 { height: 17px; } .h19 { height: 19px; }
.h20 { height: 20px; } .h23 { height: 23px; } .h24 { height: 24px; } .h27 { height: 27px; } .h30 { height: 30px; } .h42 { height: 42px; }
.grid .h14 th { line-height: 12px; }
.grid .headline { font-size: 19px; line-height: 22px; font-weight: 700; padding-left: 3px; white-space: nowrap; }
.grid .period { font-size: 15px; line-height: 18px; padding-left: 2px; }
.grid .note { font-size: 12px; line-height: 14px; padding-left: 2px; white-space: nowrap; }
.grid .right { text-align: right; padding-right: 2px; }
.grid .dark-b { border-bottom-color: #000; }
.grid .meter { border-right-color: #fff; overflow: visible; }
.strong-text, .total td { font-weight: 700; }
.grid .box { border-color: #000; text-align: center; vertical-align: middle; white-space: nowrap; padding-bottom: 1px; }
.grid .caption { font-size: 12px; }
.grid .hour { line-height: 15px; white-space: normal; }
.shade { background: #dcdcdc; }
.grid .sign { font-size: 12px; line-height: 14px; padding: 0 0 1px 2px; white-space: nowrap; }
.band {
  position: absolute;
  top: 20px;
  bottom: 0;
  width: 39px;
  background: rgba(0, 0, 0, .22);
  background-clip: padding-box;
  border: solid #fff;
  border-width: 1px 1px 0;
  box-shadow: 0 0 0 1px #a0a0a0;
  clip-path: inset(0 -1px 0 -1px);
}
.band-c { left: 129px; }
.band-g { left: 251px; width: 43px; }
.band-l { left: 413px; }
.band-u { left: 737px; }
.active-cell { position: absolute; left: 737px; top: 20px; width: 5px; height: 13px; border: 1px solid #fff; background: #217346; }

.vscroll { display: flex; flex-direction: column; width: 22px; padding: 2px 4px 0 3px; }
.vscroll button { height: 15px; background: #969696; border: 1px solid #444; }
.vthumb { flex: 1; background: #969696; border: 1px solid #444; }
.vgap { height: 19px; background: #505050; }

.sheet-tabs { display: flex; align-items: center; height: 28px; flex: none; border-top: 1px solid #999; }
.tab-nav { display: flex; width: 101px; padding-left: 29px; gap: 23px; }
.sheet-tab { align-self: stretch; margin-top: -1px; margin-bottom: 3px; width: 245px; text-align: center; padding-top: 3px; background: #fff; color: #217346; font-size: 12px; font-weight: 700; border-bottom: 2px solid #217346; line-height: 20px; white-space: nowrap; }
.add { margin: 0 auto 0 33px; }
.hscroll { display: flex; width: 474px; height: 15px; margin-right: 22px; }
.hscroll button { width: 15px; background: #969696; border: 1px solid #444; }
.hthumb { flex: 1; background: #969696; border: 1px solid #444; }
.hgap { width: 15px; background: #505050; }

.status { display: flex; align-items: center; height: 23px; flex: none; padding: 0 20px 0 8px; border-top: 1px solid #444; color: #fff; white-space: nowrap; }
.macro { margin-left: 20px; }
.stats { display: flex; gap: 16px; margin-left: auto; }
.views { display: flex; align-self: stretch; margin-left: 18px; }
.views button { width: 40px; }
.views .on { background: #444; }
.zoom { display: flex; align-items: center; margin-left: 5px; }
.zoom input { appearance: none; width: 100px; height: 11px; margin: 0 6px; background: linear-gradient(#fff, #fff) center / 100% 1px no-repeat; }
.zoom input::-webkit-slider-thumb { appearance: none; width: 5px; height: 11px; background: #fff; }
.zoom span { margin-left: 12px; }

.taskbar { display: flex; height: 40px; flex: none; background: #1c1e20; color: #fff; font-size: 12px; }
.taskbar button { position: relative; width: 49px; }
.taskbar .sys { width: 48px; }
.apps { display: flex; padding-left: 3px; }
.taskbar .open::after { content: ""; position: absolute; left: 4px; right: 5px; bottom: 0; height: 2px; background: #a8d4f4; }
.taskbar .lit { background: #484a4c; width: 48px; }
.taskbar .lit::after { left: 0; right: 0; }
.badge { position: absolute; left: 22px; top: 18px; width: 16px; height: 16px; border-radius: 8px; background: #f03a30; font-size: 12px; line-height: 16px; text-align: center; }
.tray { display: flex; align-items: center; margin-left: auto; padding-right: 25px; gap: 8px; white-space: nowrap; }
.help { margin-right: 2px; }
.lang { margin-left: 3px; }
.clock { display: flex; flex-direction: column; align-items: center; line-height: 18px; font-size: 11px; margin-left: 5px; }
.bell { margin-left: 9px; }
```
